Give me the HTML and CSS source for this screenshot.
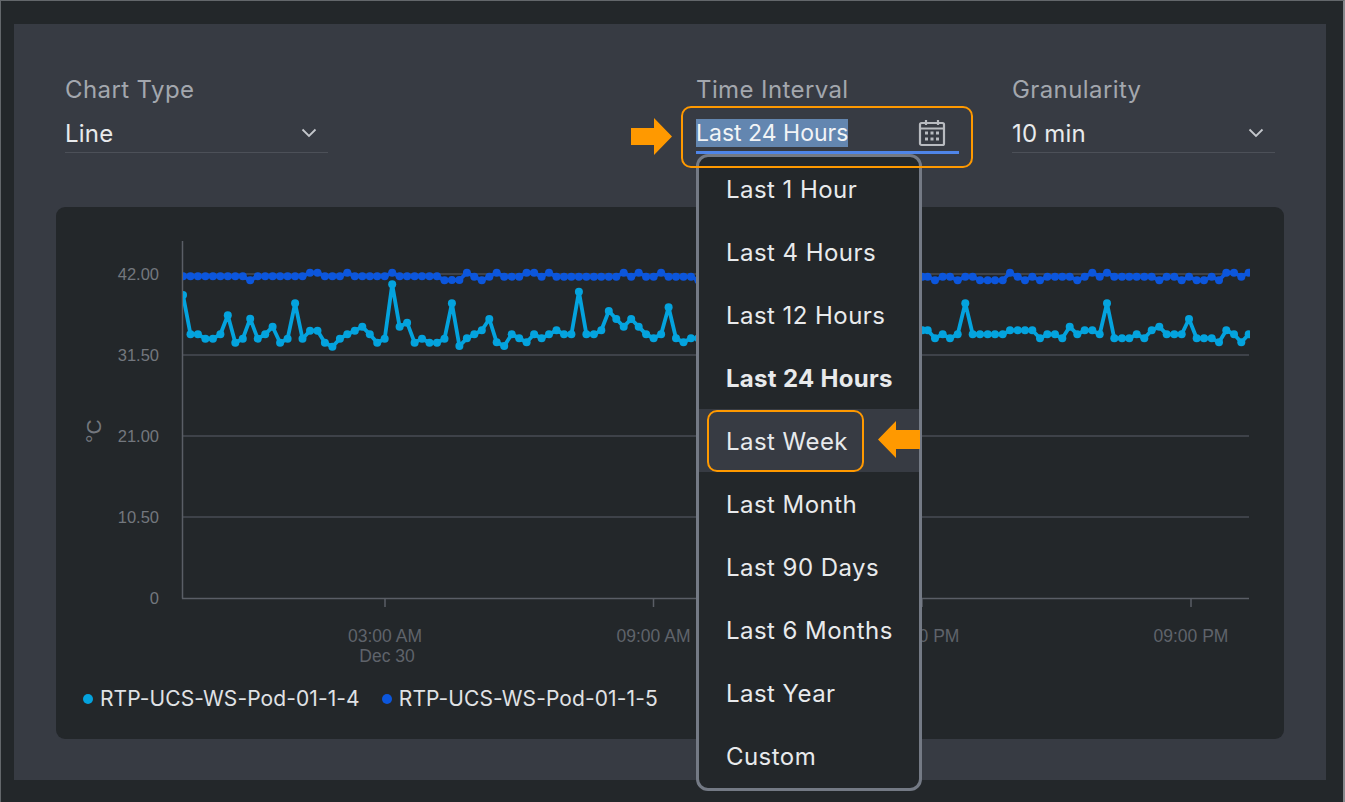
FILE: index.html
```html
<!DOCTYPE html>
<html lang="en">
<head>
    <meta charset="UTF-8">
    <title>Chart Settings</title>
    <link rel="stylesheet" href="styles.css">
</head>
<body>
    <div class="panel">
        <div class="filters">
            <div class="field field-type">
                <div class="field-label">Chart Type</div>
                <div class="field-value">
                    <span>Line</span>
                    <svg class="chevron" viewBox="0 0 16 10"><path d="M1.5 1.5 L8 8 L14.5 1.5"/></svg>
                </div>
            </div>

            <div class="field field-time">
                <div class="field-label">Time Interval</div>
                <div class="field-value is-active">
                    <span class="selected">Last 24 Hours</span>
                    <svg class="calendar" viewBox="0 0 28 28">
                        <rect x="2" y="4" width="24" height="22" rx="1.5"/>
                        <path d="M2 9.5 H26 M8 1 V6 M20 1 V6"/>
                        <g class="calendar-dots">
                            <rect x="7" y="12.500" width="3" height="3"/>
                            <rect x="12.500" y="12.500" width="3" height="3"/>
                            <rect x="18" y="12.500" width="3" height="3"/>
                            <rect x="7" y="18.500" width="3" height="3"/>
                            <rect x="12.500" y="18.500" width="3" height="3"/>
                            <rect x="18" y="18.500" width="3" height="3"/>
                        </g>
                    </svg>
                </div>
                <svg class="arrow arrow-field" viewBox="0 0 41 37"><path d="M0 10 H23 V0 L41 18.500 L23 37 V27 H0 Z"/></svg>
                <div class="callout callout-field"></div>
                <ul class="menu">
                    <li>Last 1 Hour</li>
                    <li>Last 4 Hours</li>
                    <li>Last 12 Hours</li>
                    <li class="current">Last 24 Hours</li>
                    <li class="hovered">
                        <span class="callout-item">Last Week</span>
                        <svg class="arrow arrow-item" viewBox="0 0 42 37"><path d="M42 9 H18 V0 L0 18.500 L18 37 V28 H42 Z"/></svg>
                    </li>
                    <li>Last Month</li>
                    <li>Last 90 Days</li>
                    <li>Last 6 Months</li>
                    <li>Last Year</li>
                    <li>Custom</li>
                </ul>
            </div>

            <div class="field field-gran">
                <div class="field-label">Granularity</div>
                <div class="field-value">
                    <span>10 min</span>
                    <svg class="chevron" viewBox="0 0 16 10"><path d="M1.5 1.5 L8 8 L14.5 1.5"/></svg>
                </div>
            </div>
        </div>

        <div class="chart-card">
            <!-- viewBox uses page coordinates minus the card's corner, so the numbers read off the screenshot -->
            <svg class="chart" viewBox="56 207 1228 470">
                <defs>
                    <clipPath id="plot"><rect x="183" y="240" width="1067" height="358"/></clipPath>
                    <marker id="dot-cyan" markerUnits="userSpaceOnUse" markerWidth="9" markerHeight="9" refX="4.5" refY="4.5">
                        <circle cx="4.5" cy="4.5" r="4" fill="#04a3de"/>
                    </marker>
                    <marker id="dot-blue" markerUnits="userSpaceOnUse" markerWidth="9" markerHeight="9" refX="4.5" refY="4.5">
                        <circle cx="4.5" cy="4.5" r="4" fill="#0c56dc"/>
                    </marker>
                </defs>

                <g class="grid">
                    <line x1="183" y1="274" x2="1249" y2="274"/>
                    <line x1="183" y1="355" x2="1249" y2="355"/>
                    <line x1="183" y1="436" x2="1249" y2="436"/>
                    <line x1="183" y1="517" x2="1249" y2="517"/>
                    <line class="axis" x1="182.500" y1="241" x2="182.500" y2="598.500"/>
                    <line class="axis" x1="182" y1="598.500" x2="1249" y2="598.500"/>
                    <line class="axis" x1="385" y1="599" x2="385" y2="607"/>
                    <line class="axis" x1="653.500" y1="599" x2="653.500" y2="607"/>
                    <line class="axis" x1="922" y1="599" x2="922" y2="607"/>
                    <line class="axis" x1="1191" y1="599" x2="1191" y2="607"/>
                </g>

                <g class="tick-y">
                    <text x="159" y="280">42.00</text>
                    <text x="159" y="361">31.50</text>
                    <text x="159" y="442">21.00</text>
                    <text x="159" y="523">10.50</text>
                    <text x="159" y="604">0</text>
                </g>
                <text class="unit" transform="translate(101 443) rotate(-90)">°C</text>

                <g class="tick-x">
                    <text x="385" y="642">03:00 AM</text>
                    <text x="387" y="662">Dec 30</text>
                    <text x="653.500" y="642">09:00 AM</text>
                    <text x="922" y="642">03:00 PM</text>
                    <text x="1191" y="642">09:00 PM</text>
                </g>

                <g clip-path="url(#plot)">
                    <polyline class="series series-blue" points="183,276.300 190.500,276.300 197.900,276.300 205.400,276.300 212.900,276.300 220.400,276.300 227.800,276.300 235.300,276.300 242.800,276.300 250.200,280.300 257.700,276.300 265.200,276.300 272.600,276.300 280.100,276.300 287.600,276.300 295.100,276.300 302.500,276.300 310,272.700 317.500,272.700 324.900,276.300 332.400,276.300 339.900,276.300 347.300,272.700 354.800,276.300 362.300,276.300 369.800,276.300 377.200,276.300 384.700,276.300 392.200,272.700 399.600,276.300 407.100,276.300 414.600,276.300 422,276.300 429.500,276.300 437,276.300 444.500,280.300 451.900,280 459.400,280 466.900,272.700 474.300,276.700 481.800,280.300 489.300,276.700 496.700,272.700 504.200,276.700 511.700,276.700 519.200,276.700 526.600,272.700 534.100,272.700 541.600,276.700 549,272.700 556.500,276.700 564,276.700 571.400,276.700 578.900,276.700 586.400,276.700 593.900,276.700 601.300,276.700 608.800,276.700 616.300,276.700 623.700,272.700 631.200,276.700 638.700,272.700 646.100,276.700 653.600,276.700 661.100,272.700 668.600,276.700 676,276.700 683.500,276.700 691,276.700 698.400,280.300 922.300,276.700 927.700,276.700 935,280.300 942.700,276.700 950,276.700 957.700,280.300 965.300,276.700 972.700,276.700 980,280.300 987.700,280.300 995,280.300 1002.700,280.300 1010,272.700 1017.700,276.700 1025,280.300 1032.300,276.700 1040,280.300 1047.300,276.700 1055,276.700 1062.300,276.700 1069.700,276.700 1077.300,280.300 1084.700,276.700 1092.300,272.700 1099.700,276.700 1107,272.700 1114.300,276.700 1122,276.700 1129.300,276.700 1136.700,276.700 1144.300,276.700 1151.700,276.700 1159.300,280.300 1166.700,276.700 1174.300,276.700 1181.700,280.300 1189,276.700 1196.700,280.300 1204,280.300 1211.700,276.700 1219,280.300 1226.300,272.700 1234,272.700 1241.300,276.700 1248.700,272.700"/>
                    <polyline class="series series-cyan" points="183,295 190.500,334.300 197.900,334.300 205.400,338.700 212.900,338.700 220.400,334.300 227.800,315.300 235.300,342.700 242.800,338.700 250.200,318.700 257.700,338.700 265.200,334.300 272.600,326.700 280.100,342.700 287.600,338.700 295.100,303.300 302.500,338.700 310,330.700 317.500,330.700 324.900,342.700 332.400,346.700 339.900,338.700 347.300,334.300 354.800,330.700 362.300,326.700 369.800,334.300 377.200,342.700 384.700,338.700 392.200,284.300 399.600,326.700 407.100,322.700 414.600,342.700 422,338.700 429.500,342.700 437,342.700 444.500,338.700 451.900,303.300 459.400,346 466.900,338.300 474.300,334.300 481.800,330.300 489.300,319 496.700,342.300 504.200,346 511.700,334.300 519.200,338.300 526.600,342.300 534.100,334.300 541.600,338.300 549,334.300 556.500,330.300 564,334.300 571.400,334.300 578.900,291.700 586.400,334.300 593.900,334.300 601.300,330.300 608.800,311 616.300,319 623.700,326.700 631.200,319 638.700,326.700 646.100,334.300 653.600,338.300 661.100,334.300 668.600,307.300 676,338.300 683.500,342.300 691,338.300 698.400,338.300 922.300,330.300 927.700,330.300 935,338.300 942.700,334.300 950,338.300 957.700,334.300 965.300,303.300 972.700,334.300 980,334.300 987.700,334.300 995,334.300 1002.700,334.300 1010,330.300 1017.700,330.300 1025,330.300 1032.300,330.300 1040,338.300 1047.300,334.300 1055,334.300 1062.300,338.300 1069.700,326.700 1077.300,334.300 1084.700,330.300 1092.300,330.300 1099.700,334.300 1107,303.300 1114.300,338.300 1122,338.300 1129.300,338.300 1136.700,334.300 1144.300,338.300 1151.700,330.300 1159.300,326.700 1166.700,334.300 1174.300,334.300 1181.700,334.300 1189,319 1196.700,338.300 1204,338.300 1211.700,338.300 1219,342.300 1226.300,330.300 1234,334.300 1241.300,342.300 1248.700,334.300"/>
                </g>
            </svg>

            <div class="legend">
                <span class="legend-item"><i class="swatch swatch-cyan"></i>RTP-UCS-WS-Pod-01-1-4</span>
                <span class="legend-item"><i class="swatch swatch-blue"></i>RTP-UCS-WS-Pod-01-1-5</span>
            </div>
        </div>
    </div>
</body>
</html>
```

FILE: styles.css
```css
* {
    box-sizing: border-box;
}
html, body {
    margin: 0;
    height: 100%;
}
body {
    background-color: #23272a;
    border-top: 1px solid #63676b;
    border-left: 1px solid #63676b;
    border-right: 2px solid #85888c;
    padding: 23px 17px 22px 13px;
    font-family: Inter, "Noto Sans", sans-serif;
    overflow: hidden;
}
.panel {
    background-color: #373b43;
    height: 756px;
    padding: 51px 42px 0 42px;
}
.filters {
    display: flex;
    gap: 53px;
    padding: 0 9px;
    height: 132px;
}
.field {
    width: 263px;
    position: relative;
}
.field-type {
    margin-right: auto;
}
.field-label {
    color: #a3a7ae;
    font-size: 24px;
    line-height: 30px;
    letter-spacing: 0.4px;
}
.field-value {
    display: flex;
    align-items: center;
    justify-content: space-between;
    color: #e8eaec;
    font-size: 24px;
    letter-spacing: 0.2px;
    height: 48px;
    padding: 9px 11px 0 0;
    border-bottom: 1px solid #4c5058;
}
.field-value.is-active {
    height: 49px;
    border-bottom: 3px solid #4f85e8;
    padding-right: 13px;
}
.selected {
    background-color: #6386b0;
    font-size: 23px;
    letter-spacing: 0;
    line-height: 28px;
    color: #f2f4f6;
}
.chevron {
    width: 16px;
    height: 10px;
    fill: none;
    stroke: #c4c7cc;
    stroke-width: 1.800;
}
.calendar {
    width: 28px;
    height: 28px;
    fill: none;
    stroke: #b8bbc0;
    stroke-width: 2.200;
}
.calendar-dots {
    fill: #b8bbc0;
    stroke: none;
}

/* orange annotations drawn on top of the screenshot */
.arrow {
    position: absolute;
    fill: #ff9900;
}
.arrow-field {
    width: 41px;
    height: 37px;
    left: -65px;
    top: 43px;
}
.callout {
    position: absolute;
    border: 2px solid #ff9900;
    border-radius: 10px;
}
.callout-field {
    left: -15px;
    top: 31px;
    width: 292px;
    height: 62px;
    z-index: 2;
}
.menu {
    position: absolute;
    left: 0;
    top: 79px;
    width: 226px;
    height: 637px;
    margin: 0;
    padding: 0;
    list-style: none;
    background-color: #23272a;
    border: 3px solid #747a85;
    border-radius: 12px;
    z-index: 1;
}
.menu li {
    display: flex;
    align-items: center;
    height: 63px;
    padding: 1px 0 0 27px;
    color: #e8eaec;
    font-size: 24px;
    letter-spacing: 0.45px;
    position: relative;
}
.menu .current {
    font-weight: 700;
    letter-spacing: 0.3px;
}
.menu .hovered {
    background-color: #373b43;
    padding-top: 0;
}
.callout-item {
    margin-left: -19px;
    padding: 0 14px 0 17px;
    height: 62px;
    line-height: 59px;
    border: 2px solid #ff9900;
    border-radius: 10px;
}
.arrow-item {
    width: 42px;
    height: 37px;
    right: -1px;
    top: 12px;
}

.chart-card {
    background-color: #23272a;
    border-radius: 9px;
    height: 532px;
    overflow: hidden;
}
.chart {
    display: block;
    width: 1228px;
    height: 470px;
    font-family: "Liberation Sans", Arial, sans-serif;
}
.grid line {
    stroke: #494d55;
    stroke-width: 1.500;
}
.grid .axis {
    stroke: #5a5e66;
    stroke-width: 1.500;
}
.tick-y text {
    fill: #73777e;
    font-size: 16.500px;
    text-anchor: end;
}
.tick-x text {
    fill: #5f636a;
    font-size: 17.500px;
    text-anchor: middle;
}
.unit {
    fill: #73777e;
    font-size: 21px;
}
.series {
    fill: none;
    stroke-width: 3.800;
    stroke-linejoin: round;
}
.series-cyan {
    stroke: #04a3de;
    marker: url(#dot-cyan);
}
.series-blue {
    stroke: #0c56dc;
    marker: url(#dot-blue);
}
.legend {
    display: flex;
    gap: 22px;
    padding: 9px 0 0 27px;
    color: #e0e2e5;
    font-size: 21px;
    letter-spacing: 0.1px;
    line-height: 26px;
}
.legend-item {
    display: flex;
    align-items: center;
    gap: 7px;
}
.swatch {
    width: 10px;
    height: 10px;
    border-radius: 50%;
}
.swatch-cyan {
    background-color: #04a3de;
}
.swatch-blue {
    background-color: #0c56dc;
}
```
